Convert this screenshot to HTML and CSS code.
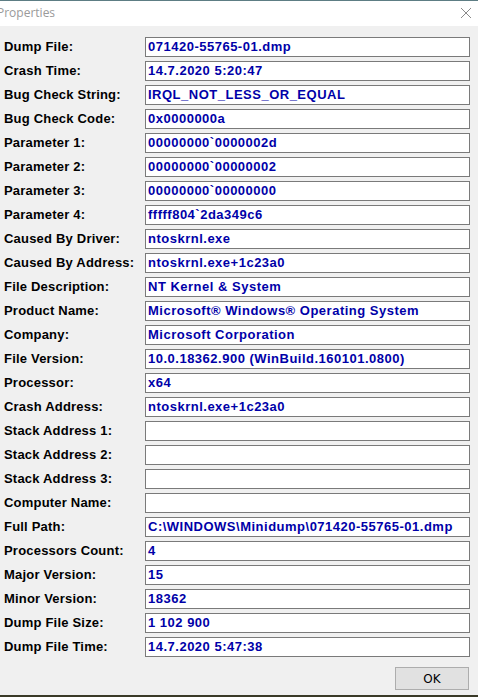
FILE: index.html
```html
<!DOCTYPE html>
<html>
<head>
<meta charset="utf-8">
<link rel="stylesheet" href="styles.css">
</head>
<body>
<div class="window">
  <div class="titlebar">
    <span class="title">Properties</span>
    <svg class="close" width="12" height="12" viewBox="0 0 12 12"><path d="M1 1 L11 11 M11 1 L1 11" stroke="#8a8a8a" stroke-width="1" fill="none"/></svg>
  </div>
  <div class="content">
    <div class="grid">
      <div class="label">Dump File:</div><div class="field">071420-55765-01.dmp</div>
      <div class="label">Crash Time:</div><div class="field">14.7.2020 5:20:47</div>
      <div class="label">Bug Check String:</div><div class="field">IRQL_NOT_LESS_OR_EQUAL</div>
      <div class="label">Bug Check Code:</div><div class="field">0x0000000a</div>
      <div class="label">Parameter 1:</div><div class="field">00000000`0000002d</div>
      <div class="label">Parameter 2:</div><div class="field">00000000`00000002</div>
      <div class="label">Parameter 3:</div><div class="field">00000000`00000000</div>
      <div class="label">Parameter 4:</div><div class="field">fffff804`2da349c6</div>
      <div class="label">Caused By Driver:</div><div class="field">ntoskrnl.exe</div>
      <div class="label">Caused By Address:</div><div class="field">ntoskrnl.exe+1c23a0</div>
      <div class="label">File Description:</div><div class="field">NT Kernel &amp; System</div>
      <div class="label">Product Name:</div><div class="field">Microsoft® Windows® Operating System</div>
      <div class="label">Company:</div><div class="field">Microsoft Corporation</div>
      <div class="label">File Version:</div><div class="field">10.0.18362.900 (WinBuild.160101.0800)</div>
      <div class="label">Processor:</div><div class="field">x64</div>
      <div class="label">Crash Address:</div><div class="field">ntoskrnl.exe+1c23a0</div>
      <div class="label">Stack Address 1:</div><div class="field"></div>
      <div class="label">Stack Address 2:</div><div class="field"></div>
      <div class="label">Stack Address 3:</div><div class="field"></div>
      <div class="label">Computer Name:</div><div class="field"></div>
      <div class="label">Full Path:</div><div class="field">C:\WINDOWS\Minidump\071420-55765-01.dmp</div>
      <div class="label">Processors Count:</div><div class="field">4</div>
      <div class="label">Major Version:</div><div class="field">15</div>
      <div class="label">Minor Version:</div><div class="field">18362</div>
      <div class="label">Dump File Size:</div><div class="field">1 102 900</div>
      <div class="label">Dump File Time:</div><div class="field">14.7.2020 5:47:38</div>
    </div>
    <div class="buttons">
      <button class="ok">OK</button>
    </div>
  </div>
  <div class="desktop"></div>
</div>
</body>
</html>
```
FILE: styles.css
```css
html, body {
  margin: 0;
  padding: 0;
  width: 478px;
  height: 697px;
  overflow: hidden;
  background: #f0f0f0;
}
.window {
  display: flex;
  flex-direction: column;
  width: 478px;
  height: 697px;
}
.titlebar {
  height: 25px;
  background: #ffffff;
  border-top: 1px solid #5d7d84;
  display: flex;
  align-items: center;
  justify-content: space-between;
  padding-right: 6px;
}
.title {
  font-family: "Open Sans", "Noto Sans", sans-serif;
  font-size: 12px;
  color: #9a9a9a;
  margin-left: -3px;
  margin-top: -2px;
}
.close {
  margin-top: -1px;
}
.content {
  flex: 1;
  background: #f0f0f0;
  padding: 11px 9px 0 4px;
  display: flex;
  flex-direction: column;
}
.grid {
  display: grid;
  grid-template-columns: 141px 325px;
  grid-auto-rows: 20px;
  row-gap: 4px;
}
.label {
  font-family: "Liberation Sans", Arial, sans-serif;
  font-weight: bold;
  font-size: 13px;
  letter-spacing: 0.2px;
  color: #000;
  line-height: 20px;
}
.field {
  box-sizing: border-box;
  background: #fff;
  border: 1px solid #7a7a7a;
  font-family: "Liberation Sans", Arial, sans-serif;
  font-weight: bold;
  font-size: 13px;
  letter-spacing: 0.5px;
  color: #0000a8;
  line-height: 18px;
  padding-left: 2px;
  white-space: nowrap;
  overflow: hidden;
}
.buttons {
  display: flex;
  justify-content: flex-end;
  margin-top: 10px;
}
.ok {
  width: 74px;
  height: 23px;
  box-sizing: border-box;
  background: #e1e1e1;
  border: 1px solid #adadad;
  font-family: "DejaVu Sans", sans-serif;
  font-size: 12px;
  color: #000;
  padding: 0;
  margin-right: 0;
}
.desktop {
  height: 2px;
  background: #3a3a28;
}
```
